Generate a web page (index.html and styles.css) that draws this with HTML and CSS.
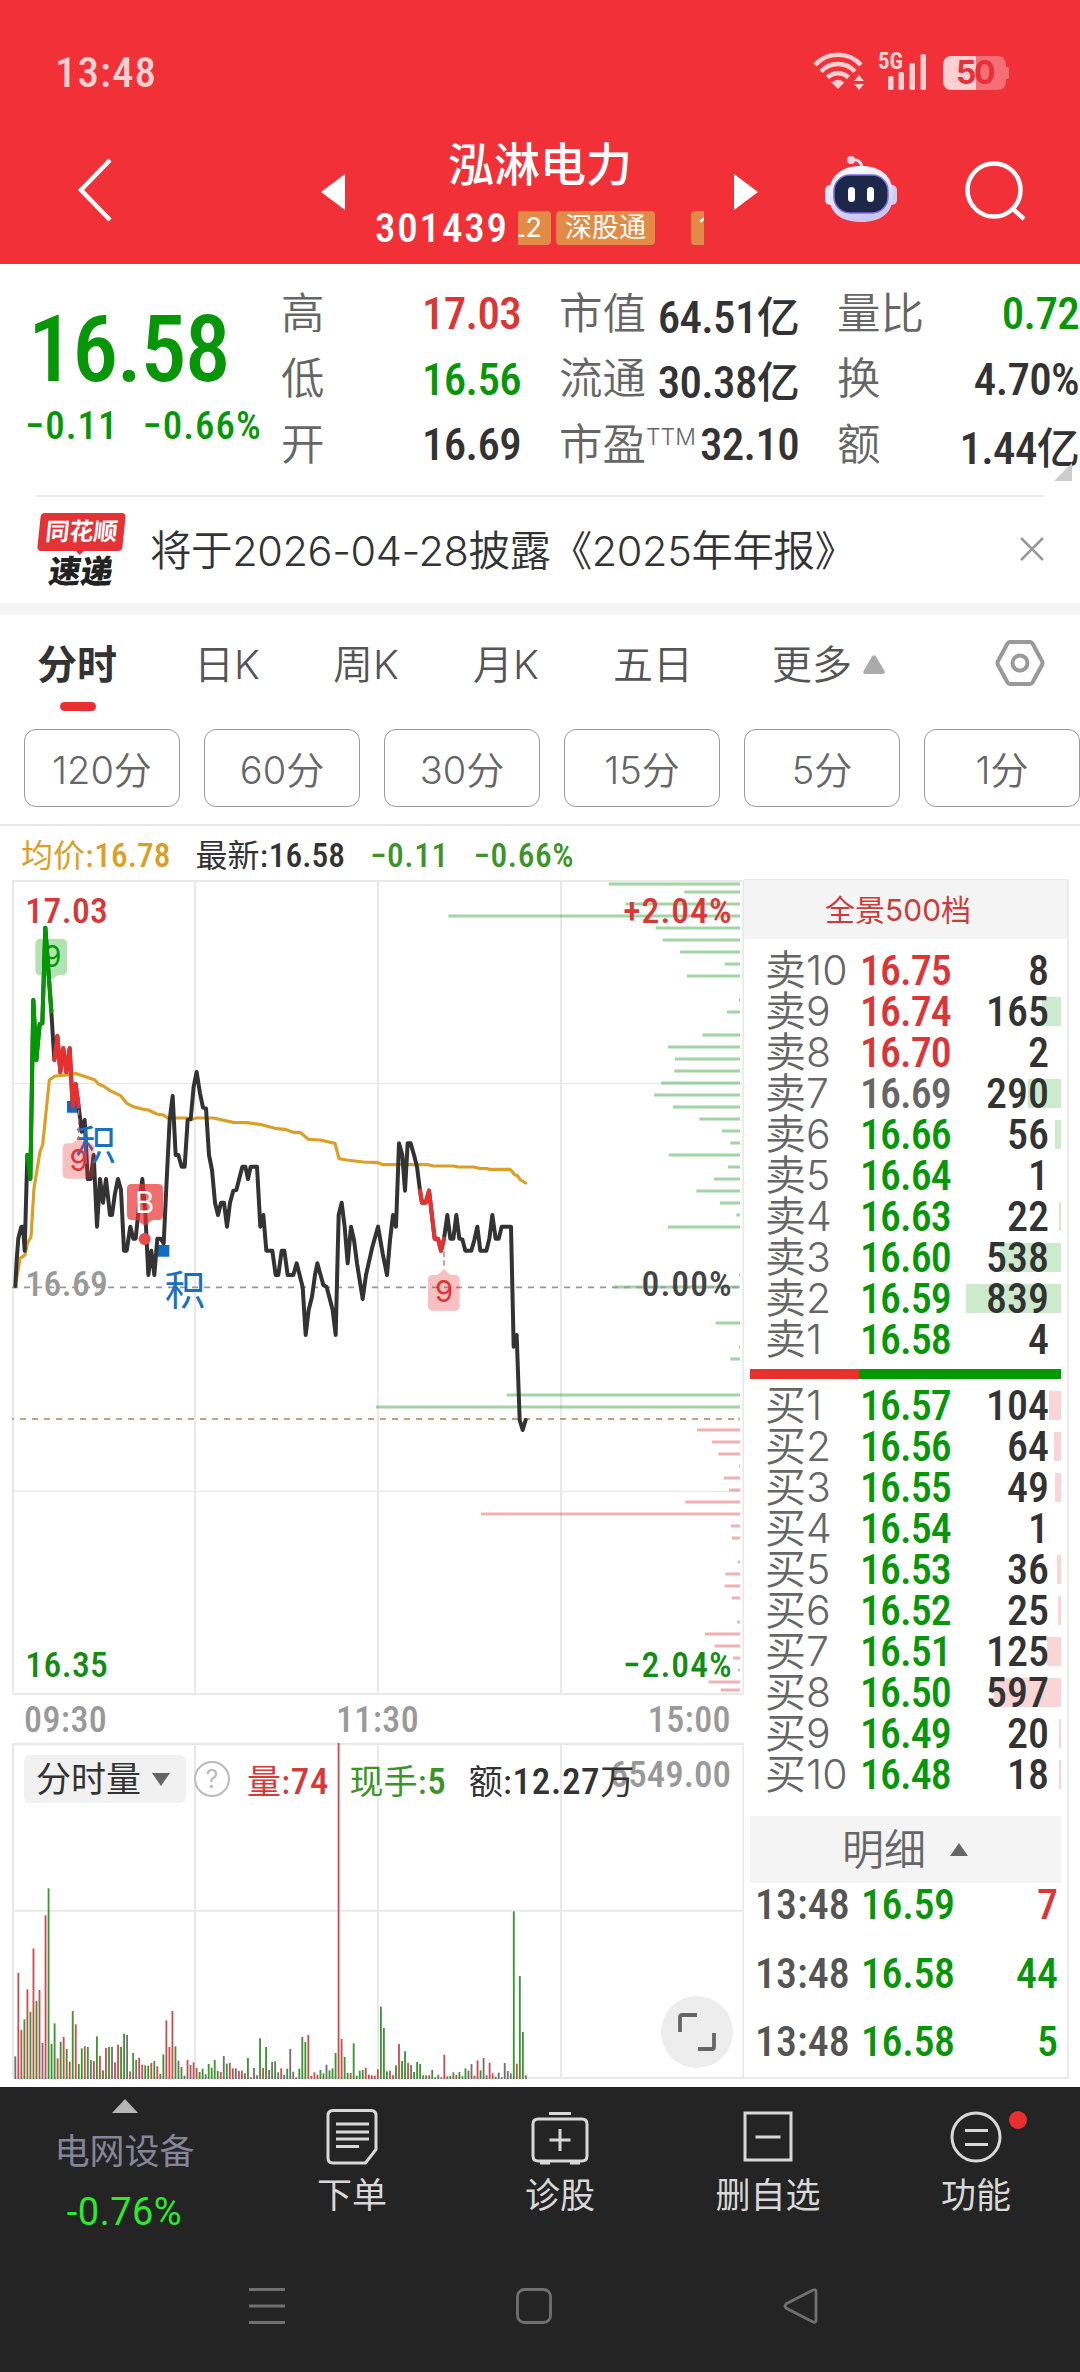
FILE: index.html
```html
<!DOCTYPE html>
<html lang="zh-CN">
  <head>
    <meta charset="UTF-8" />
    <meta name="viewport" content="width=device-width, initial-scale=1.0" />
    <title>泓淋电力 301439</title>
    <link rel="stylesheet" href="styles.css">
  </head>
  <body>
    <header class="header">
      <div class="status-bar">
        <span class="clock">13:48</span>
        <svg class="status-icons" width="200" height="40" viewBox="0 0 200 40">
          <g fill="none" stroke="#ffcfd1" stroke-width="4.6">
            <path d="M4 15a31 31 0 0 1 46 0" />
            <path d="M10 21.500a23 23 0 0 1 34 0" />
            <path d="M16.500 27.500a15 15 0 0 1 21 0" />
          </g>
          <g fill="#ffcfd1">
            <path d="M27 39l-6.500-6.500q6.500-5.500 13 0z" />
            <path d="M48 25l5 6h-10zM48 40l5-6h-10z" />
            <rect x="77" y="26" width="5.500" height="14" rx="1.500" />
            <rect x="87.500" y="22" width="5.500" height="18" rx="1.500" />
            <rect x="98.500" y="13" width="5.500" height="27" rx="1.500" />
            <rect x="109.500" y="4" width="5.500" height="36" rx="1.500" />
            <text x="67" y="19" class="net">5G</text>
            <path d="M141 6h24v34h-24q-9 0-9-9v-16q0-9 9-9z" />
            <path d="M165 6h21q9 0 9 9v2h1.500q1.500 0 1.500 2v8q0 2-1.500 2h-1.500v2q0 9-9 9h-21z" opacity=".4" />
          </g>
          <text x="145" y="34" class="battery">50</text>
        </svg>
      </div>
      <div class="title-bar">
        <svg class="back" width="36" height="64" viewBox="0 0 36 64">
          <path d="M33 2L4 32l29 30" fill="none" stroke="#fff" stroke-width="4.500" />
        </svg>
        <svg class="prev" width="24" height="36" viewBox="0 0 24 36"><path d="M24 0v36L0 18z" fill="#fff" /></svg>
        <div class="stock">
          <h1>泓淋电力</h1>
          <div class="stock-code">
            <span class="code">301439</span>
            <div class="tags">
              <span class="tag tag-l2">L2</span>
              <span class="tag">深股通</span>
              <span class="tag tag-next">10</span>
            </div>
          </div>
        </div>
        <svg class="next" width="24" height="36" viewBox="0 0 24 36"><path d="M0 0v36l24-18z" fill="#fff" /></svg>
        <svg class="robot" width="74" height="68" viewBox="0 0 74 68">
          <defs>
            <linearGradient id="shell" x1="0" y1="0" x2="0.3" y2="1">
              <stop offset="0" stop-color="#fff" />
              <stop offset="0.6" stop-color="#e3e2f8" />
              <stop offset="1" stop-color="#c9c8f2" />
            </linearGradient>
          </defs>
          <path d="M27 5q10-2 11 8" fill="none" stroke="#f3dff0" stroke-width="3" />
          <circle cx="27" cy="5" r="4" fill="#f6d5e2" />
          <rect x="1" y="30" width="10" height="20" rx="5" fill="#e6e4fa" />
          <rect x="63" y="30" width="10" height="20" rx="5" fill="#cfcdf4" />
          <path d="M37 11c20 0 32 10 32 29 0 18-12 27-32 27S5 58 5 40c0-19 12-29 32-29z" fill="url(#shell)" />
          <rect x="10" y="20" width="54" height="38" rx="16" fill="#1d2749" stroke="#7b6be6" stroke-width="1.500" />
          <rect x="24" y="32" width="7" height="15" rx="3.500" fill="#fff" />
          <rect x="43" y="32" width="7" height="15" rx="3.500" fill="#fff" />
        </svg>
        <svg class="search" width="62" height="62" viewBox="0 0 62 62">
          <g fill="none" stroke="#fff" stroke-width="4.500">
            <circle cx="29" cy="30" r="26.500" />
            <path d="M48 49l11 10" />
          </g>
        </svg>
      </div>
    </header>

    <section class="quote">
      <div class="last green">
        <div class="last-price">16.58</div>
        <div class="last-change"><span>−0.11</span><span>−0.66%</span></div>
      </div>
      <div class="stats">
        <div class="stat"><span>高</span><b class="red">17.03</b></div>
        <div class="stat"><span>市值</span><b>64.51<i>亿</i></b></div>
        <div class="stat"><span>量比</span><b class="green">0.72</b></div>
        <div class="stat"><span>低</span><b class="green">16.56</b></div>
        <div class="stat"><span>流通</span><b>30.38<i>亿</i></b></div>
        <div class="stat"><span>换</span><b>4.70%</b></div>
        <div class="stat"><span>开</span><b>16.69</b></div>
        <div class="stat"><span>市盈<sup>TTM</sup></span><b>32.10</b></div>
        <div class="stat"><span>额</span><b>1.44<i>亿</i></b></div>
      </div>
      <i class="corner"></i>
    </section>

    <section class="notice">
      <div class="notice-logo">
        <span class="logo-top">同花顺</span>
        <span class="logo-bottom">速递</span>
      </div>
      <p>将于2026-04-28披露《2025年年报》</p>
      <svg class="close" width="24" height="24" viewBox="0 0 24 24">
        <path d="M1 1l22 22M23 1L1 23" stroke="#999" stroke-width="2.500" />
      </svg>
    </section>

    <nav class="tabs">
      <span class="tab active">分时</span>
      <span class="tab">日K</span>
      <span class="tab">周K</span>
      <span class="tab">月K</span>
      <span class="tab">五日</span>
      <span class="tab more">更多<svg width="22" height="19" viewBox="0 0 22 19"><path d="M9 1.500q2-2.500 4 0L21.500 16q1 3-2 3h-17q-3 0-2-3z" fill="#aaa" /></svg></span>
      <svg class="settings" width="50" height="48" viewBox="0 0 50 48">
        <g fill="none" stroke="#999" stroke-width="4">
          <path d="M15 3h20q1.500 0 2.500 1.500L47 22q1 2 0 4L37.500 43.500Q36.500 45 35 45H15q-1.500 0-2.500-1.500L3 26q-1-2 0-4l9.500-17.500Q13.500 3 15 3z" />
          <circle cx="25" cy="24" r="7.500" />
        </g>
      </svg>
    </nav>

    <div class="periods">
      <button>120分</button>
      <button>60分</button>
      <button>30分</button>
      <button>15分</button>
      <button>5分</button>
      <button>1分</button>
    </div>

    <div class="legend">
      <span class="avg">均价:<b>16.78</b></span>
      <span>最新:<b>16.58</b></span>
      <span class="green2"><b>−0.11</b></span>
      <span class="green2"><b>−0.66%</b></span>
    </div>

    <main class="board">
      <div class="charts">
        <svg class="price-chart" width="744" height="815" viewBox="0 60 2232 2445">
          <!-- grid -->
          <path d="M39 63H2232M39 2502H2232M39 60V2502M585 60V2502M1134 60V2502M1683 60V2502M2230 60V2502" class="grid" />
          <path d="M39 671H2232M39 1894H2232" class="grid thin" />
          <!-- order depth -->
          <g transform="translate(1110)">
            <path class="depth-sell" d="M717 72H1110M943 96H1110M766 132H1110M235 168H1110M857 204H1110M878 240H1110M930 276H1110M1064 312H1110M951 348H1110M1107 420H1110M1071 456H1110M997 525H1110M894 561H1110M915 597H1110M913 633H1110M873 669H1110M852 705H1110M909 741H1110M988 777H1110M1056 813H1110M1081 849H1110M897 885H1110M1074 921H1110M1032 957H1110M979 993H1110M1050 1029H1110M1099 1065H1110M894 1101H1110M1107 1245H1110M731 1281H1110M1037 1389H1110M1107 1461H1110M1081 1497H1110M410 1605H1110M18 1641H1110M1104 1677H1110" />
            <path class="depth-buy" d="M981 1710H1110M1026 1746H1110M1045 1782H1110M1107 1818H1110M1062 1854H1110M1077 1890H1110M946 1926H1110M333 1962H1110M1083 1998H1110M1086 2034H1110M1103 2106H1110M1066 2142H1110M1064 2178H1110M1085 2214H1110M1101 2286H1110M1005 2322H1110M1034 2358H1110M1089 2394H1110M1103 2430H1110M1016 2466H1110M1052 2490H1110" />
          </g>
          <path d="M36 1282H2220" stroke="#999" stroke-width="5" stroke-dasharray="18" />
          <path d="M36 1677H2214" stroke="#bfa37c" stroke-width="6" stroke-dasharray="18" stroke-dashoffset="12" />
          <text x="76" y="1307" class="axis" fill="#999">16.69</text>
          <!-- average line -->
          <polyline class="line avg-line" points="46,1281 60,1195 75,1185 82,1150 93,1130 102,985 120,875 128,855 148,660 165,648 200,645 225,640 270,655 285,660 295,672 310,678 330,692 362,707 380,730 400,740 430,748 445,750 470,762 490,765 503,774 560,774 575,778 590,774 640,774 700,787 740,788 785,794 830,806 855,808 880,817 900,817 925,838 960,840 1005,850 1017,896 1040,900 1090,906 1134,908 1150,914 1285,914 1300,918 1360,918 1375,921 1420,921 1440,925 1460,926 1470,928 1530,928 1545,945 1550,945 1562,960 1577,969" />
          <!-- price line -->
          <path d="M201 723h33v35h-33zM473 1155h35v35h-35z" fill="#0f6cc4" />
          <path d="M120 237h67q14 0 14 14v80q0 14-14 14h-12l-20 14-20-14h-15q-14 0-14-14v-80q0-14 14-14z" fill="#009a00" opacity=".3" />
          <text x="157" y="320" class="mark" fill="#009a00">9</text>
          <polyline class="line" points="46,1278 50,1200 55,1135 64,1100 69,1100 74,1172 82,885 91,957 100,420 109,600 119,492 127,490 136,203 145,330 154,455 163,600 172,528 181,636 190,565 199,636 209,565 218,740 227,672 236,740 245,815 254,780 263,957 272,957 281,885 291,1100 300,957 309,1028 318,957 330,1065 336,1065 345,1000 354,957 363,990 372,1172 380,1172 391,1100 400,1136 407,1136 418,1028 427,957 436,1060 445,1245 454,1172 463,1245 472,1136 482,1136 491,1150 500,960 509,780 518,708 527,885 535,885 545,920 554,920 563,780 572,778 581,680 590,636 600,700 609,743 618,745 627,885 636,930 645,1028 654,1065 663,1028 672,1028 681,1100 690,1028 700,992 709,990 727,920 736,920 744,957 752,920 771,920 781,1100 790,1065 799,1172 817,1172 827,1245 835,1245 845,1172 853,1172 863,1245 880,1245 890,1210 908,1281 917,1425 926,1350 936,1310 945,1245 952,1210 970,1275 980,1281 998,1350 1007,1425 1016,1065 1025,1028 1034,1100 1043,1210 1053,1100 1062,1140 1071,1210 1088,1317 1098,1245 1116,1165 1134,1100 1148,1180 1161,1245 1170,1140 1179,1065 1188,1100 1197,850 1207,885 1215,992 1223,850 1232,850 1242,885 1251,920 1260,992 1266,1028 1277,1028 1287,992 1304,1136 1314,1136 1323,1172 1332,1136 1342,1065 1351,1136 1360,1136 1369,1065 1378,1136 1387,1138 1396,1172 1414,1172 1423,1140 1432,1100 1441,1172 1459,1172 1468,1136 1477,1065 1487,1136 1496,1136 1505,1100 1533,1100 1541,1460 1550,1425 1559,1680 1568,1710 1577,1680" />
          <polyline class="line down-run" points="82,885 91,957 100,420 109,600 119,492 127,490 136,203 145,330 154,455" />
          <polyline class="line up-run" points="163,600 172,528 181,636 190,565 199,636 209,565 218,740 227,672 236,740" />
          <polyline class="line up-run" points="1260,992 1266,1028 1277,1028 1287,992 1304,1136 1314,1136 1323,1172 1332,1136" />
          <!-- signals -->
          <text x="226" y="900" class="signal">积</text>
          <text x="494" y="1334" class="signal">积</text>
          <path d="M236 750V840M1332 1175V1228" stroke="#c66" stroke-width="4" stroke-dasharray="16 10" />
          <g fill="#e93030" fill-opacity=".3">
            <path d="M202 850h14l20-14 20 14h13q14 0 14 14v78q0 14-14 14h-67q-14 0-14-14v-78q0-14 14-14z" />
            <path d="M1298 1245h14l20-17 20 17h13q14 0 14 14v79q0 14-14 14h-67q-14 0-14-14v-79q0-14 14-14z" />
          </g>
          <text x="236" y="932" class="mark" fill="#e03333">9</text>
          <text x="1332" y="1327" class="mark" fill="#e03333">9</text>
          <path d="M395 972h80q14 0 14 14v80q0 14-14 14h-18l-23 18-23-18h-16q-14 0-14-14v-80q0-14 14-14z" fill="#e93030" opacity=".7" />
          <text x="434" y="1059" class="mark" fill="#fff">B</text>
          <circle cx="434" cy="1137" r="18" fill="#e84a4a" />
          <!-- axis labels -->
          <text x="76" y="188" class="axis" fill="#d93636">17.03</text>
          <text x="76" y="2450" class="axis" fill="#138c13">16.35</text>
          <text x="2198" y="188" class="axis end" fill="#d93636">+2.04%</text>
          <text x="2198" y="1307" class="axis end" fill="#444">0.00%</text>
          <text x="2198" y="2450" class="axis end" fill="#138c13">−2.04%</text>
        </svg>
        <div class="times"><span>09:30</span><span>11:30</span><span>15:00</span></div>
        <div class="volume">
          <svg class="volume-chart" width="744" height="336" viewBox="0 249 2232 1008">
            <path d="M39 252H2232M39 752H2232M39 1254H2232M39 249V1254M585 249V1254M1134 249V1254M1683 249V1254M2230 249V1254" class="grid" />
            <g id="bars"></g>
          </svg>
          <div class="volume-head">
            <span class="chip">分时量<i class="down"></i></span>
            <span class="help">?</span>
            <span class="red2">量:<b>74</b></span>
            <span class="green2">现手:<b>5</b></span>
            <span class="amount">额:<b>12.27</b>万</span>
            <span class="max">6549.00</span>
          </div>
          <div class="expand">
            <svg width="38" height="38" viewBox="0 0 38 38">
              <path d="M2 19V4q0-2 2-2h15M36 20v14q0 2-2 2H20" fill="none" stroke="#666" stroke-width="3.800" />
            </svg>
          </div>
        </div>
      </div>

      <aside class="book">
        <div class="book-title">全景500档</div>
        <div class="levels sell" id="sell"></div>
        <div class="ratio"><i></i></div>
        <div class="levels buy" id="buy"></div>
        <div class="detail-title">明细<i></i></div>
        <div class="deals">
          <div class="deal"><span>13:48</span><b>16.59</b><em class="red">7</em></div>
          <div class="deal"><span>13:48</span><b>16.58</b><em>44</em></div>
          <div class="deal"><span>13:48</span><b>16.58</b><em>5</em></div>
        </div>
      </aside>
    </main>

    <footer class="bottom">
      <div class="actions">
        <div class="sector">
          <i></i>
          <span>电网设备</span>
          <b>-0.76%</b>
        </div>
        <div class="action">
          <svg width="60" height="60" viewBox="0 0 60 60">
            <path d="M11 3.500h38q5 0 5 5v34L43.500 56H11q-5 0-5-5V8.500q0-5 5-5zM14 17h33M14 25h33M14 32h33M14 39.500h23" />
          </svg>
          <span>下单</span>
        </div>
        <div class="action">
          <svg width="60" height="60" viewBox="0 0 60 60">
            <path d="M19 6.500h22M8 12h44q5 0 5 5v32q0 5-5 5H8q-5 0-5-5V17q0-5 5-5zM30 22v22M19.500 33h21M10 56h10M40 56h10" />
          </svg>
          <span>诊股</span>
        </div>
        <div class="action">
          <svg width="60" height="60" viewBox="0 0 60 60">
            <path d="M7 6h46v47H7zM17.500 30h25" />
          </svg>
          <span>删自选</span>
        </div>
        <div class="action">
          <svg width="60" height="60" viewBox="0 0 60 60">
            <circle cx="30" cy="30" r="24" />
            <path d="M19 23.500h23M19 37.500h23" />
          </svg>
          <i class="dot"></i>
          <span>功能</span>
        </div>
      </div>
      <div class="system-nav">
        <svg width="36" height="36" viewBox="0 0 36 36"><path d="M0 1.500h36M0 18h36M0 34.500h36" /></svg>
        <svg width="36" height="36" viewBox="0 0 36 36"><rect x="1.500" y="1.500" width="33" height="33" rx="7" /></svg>
        <svg width="36" height="36" viewBox="0 0 36 36"><path d="M30 2L3 16q-2 2 0 4l27 14q3 1 3-2V4q0-3-3-2z" /></svg>
      </div>
    </footer>

    <script>
      // order book levels: label, price, quantity
      const sell = [
        ["卖10", "16.75", 8], ["卖9", "16.74", 165], ["卖8", "16.70", 2],
        ["卖7", "16.69", 290], ["卖6", "16.66", 56], ["卖5", "16.64", 1],
        ["卖4", "16.63", 22], ["卖3", "16.60", 538], ["卖2", "16.59", 839],
        ["卖1", "16.58", 4],
      ];
      const buy = [
        ["买1", "16.57", 104], ["买2", "16.56", 64], ["买3", "16.55", 49],
        ["买4", "16.54", 1], ["买5", "16.53", 36], ["买6", "16.52", 25],
        ["买7", "16.51", 125], ["买8", "16.50", 597], ["买9", "16.49", 20],
        ["买10", "16.48", 18],
      ];
      const open = 16.69;

      function drawLevels(id, rows) {
        document.getElementById(id).innerHTML = rows
          .map(([label, price, qty]) => {
            const color = price > open ? "red" : price < open ? "green" : "flat";
            const width = qty < 10 ? 0 : Math.max(2, Math.round(qty * 0.113));
            return `<div class="level"><i style="width:${width}px"></i><span>${label}</span><b class="${color}">${price}</b><em>${qty}</em></div>`;
          })
          .join("");
      }
      drawLevels("sell", sell);
      drawLevels("buy", buy);

      // one bar per minute: r = up, g = down, k = flat, then the y of its top
      const volume =
        "k1189 r939 r1110 g1078 r988 g1055 r865 g1023 r990 k1149 r766 g685 g1152 g1090 r1195 g1145 r1131 g1167 r1205 g1053 " +
        "r1093 g1212 g1165 r1159 g1161 k1200 r1203 g1129 r1187 g1231 r1164 g1161 k1161 r1207 r1154 g1161 g1121 k1125 r1234 g1179 " +
        "k1200 r1193 r1214 g1216 g1217 r1209 g1203 r1219 k1242 g1183 r1081 r1161 r1053 g1159 k1202 g1221 k1247 r1200 k1215 r1207 " +
        "r1224 g1236 g1226 k1243 g1212 g1223 g1200 g1233 r1236 k1188 g1211 r1209 r1225 k1225 r1233 r1232 k1240 g1194 r1252 k1224 " +
        "k1246 g1135 r1224 g1161 k1230 k1206 g1204 k1237 r1225 k1244 g1226 k1167 k1235 r1252 g1226 g1131 g1146 r1125 r1248 r1237 " +
        "r1244 g1230 g1240 k1214 g1231 g1225 g1179 r249 r1137 g1191 g1239 r1239 g1150 g1247 g1232 g1230 r1223 r1244 r1246 r1247 " +
        "r1228 g1040 g1104 g1234 r1232 r1246 g1216 r1152 g1203 g1174 r1209 k1215 g1236 g1206 g1212 g1246 k1246 r1246 g1230 g1252 " +
        "k1244 k1252 r1184 r1249 g1247 k1237 r1245 g1236 g1249 g1225 k1232 k1212 r1247 r1201 g1231 k1194 k1246 r1208 r1240 g1250 " +
        "k1238 r1252 k1209 k1233 k1240 g754 r1211 g948 g1116 r1246";
      const colors = { r: "#c94f4f", g: "#3c9432", k: "#717171" };
      document.getElementById("bars").innerHTML = volume
        .split(" ")
        .map((bar, i) => {
          const x = 46 + i * 9.063;
          return `<path d="M${x} 1257V${bar.slice(1)}" stroke="${colors[bar[0]]}" stroke-width="5.500" />`;
        })
        .join("");
    </script>
  </body>
</html>
```
FILE: styles.css
```css
* {
  box-sizing: border-box;
}

body {
  margin: 0;
  width: 1080px;
  height: 2372px;
  overflow: hidden;
  background: #fff;
  color: #333;
  font-family: Inter, "Noto Sans CJK SC", sans-serif;
}

b,
em,
i {
  font-style: normal;
}

b,
em,
.code,
.clock,
.times,
.max,
.deal span,
.last {
  font-family: "Roboto Condensed", "Noto Sans CJK SC", sans-serif;
  font-weight: 500;
}

.red {
  color: #dc3535;
}

.green {
  color: #079607;
}

.red2 {
  color: #d53a3a;
}

.green2 {
  color: #3c9428;
}

.flat {
  color: #666;
}

/* header */
.header {
  height: 264px;
  background: #f13037;
  color: #fff;
}

.status-bar {
  height: 124px;
  display: flex;
  justify-content: space-between;
  padding: 50px 69px 0 55px;
}

.clock {
  font-size: 43px;
  line-height: 44px;
  letter-spacing: 1px;
  color: #ffcfd1;
}

.net {
  font: 700 23px "Roboto Condensed", sans-serif;
}

.battery {
  font: 700 32px Inter, sans-serif;
  fill: #e93038;
  letter-spacing: -2.5px;
}

.title-bar {
  height: 140px;
  display: flex;
  align-items: flex-start;
}

.back {
  margin: 34px 0 0 77px;
}

.prev {
  margin: 50px 0 0 208px;
}

.stock {
  width: 330px;
  margin: 10px 29px 0 30px;
}

.stock h1 {
  margin: 0;
  text-align: center;
  font-size: 46px;
  line-height: 60px;
  font-weight: 500;
}

.stock-code {
  display: flex;
  align-items: center;
  height: 68px;
}

.code {
  width: 143px;
  font-size: 41px;
  letter-spacing: 1.8px;
}

.tags {
  display: flex;
  gap: 5px;
  width: 186px;
  overflow: hidden;
}

.tag {
  flex: none;
  width: 99px;
  height: 34px;
  line-height: 34px;
  border-radius: 4px;
  background: #e28b47;
  text-align: center;
  font-size: 27px;
}

.tag-l2 {
  width: 50px;
  margin-left: -17px;
}

.tag-next {
  margin-left: 31px;
  text-align: left;
  padding-left: 8px;
}

.next {
  margin-top: 50px;
}

.robot {
  margin: 31px 0 0 66px;
}

.search {
  margin: 36px 0 0 67px;
}

/* quote */
.quote {
  position: relative;
  height: 231px;
  display: flex;
}

.last {
  width: 281px;
  padding: 38px 0 0 25px;
}

.last-price {
  padding-left: 3px;
  font-size: 92px;
  line-height: 96px;
  letter-spacing: -1.7px;
}

.last-change {
  display: flex;
  gap: 24px;
  font-size: 39px;
  line-height: 56px;
  letter-spacing: 1px;
}

.stats {
  width: 799px;
  padding-top: 17px;
  display: grid;
  grid-template-columns: 240px 240px 242px;
  grid-auto-rows: 65.5px;
  column-gap: 38px;
}

.stat {
  display: flex;
  justify-content: space-between;
  align-items: center;
  white-space: nowrap;
}

.stat span {
  margin-top: -7px;
  font-size: 43.5px;
  font-weight: 350;
  color: #666;
}

.stat b {
  font-size: 45px;
  letter-spacing: -0.7px;
}

.stat b i {
  font-size: 43px;
}

.stat sup {
  font-size: 23px;
  line-height: 0;
  vertical-align: 15px;
}

.corner {
  position: absolute;
  right: 8px;
  bottom: 14px;
  border-left: 18px solid transparent;
  border-bottom: 18px solid #ccc;
}

/* notice */
.notice {
  height: 120px;
  display: flex;
  align-items: flex-start;
  border-bottom: 12px solid #f4f4f4;
  position: relative;
}

.notice::before {
  content: "";
  position: absolute;
  left: 36px;
  right: 36px;
  top: 0;
  height: 2px;
  background: #ececec;
}

.notice-logo {
  width: 90px;
  margin: 18px 0 0 36px;
  display: flex;
  flex-direction: column;
  align-items: center;
}

.logo-top {
  width: 85px;
  height: 38px;
  line-height: 37px;
  border-radius: 4px;
  background: #e33336;
  color: #fff;
  text-align: center;
  font-size: 24px;
  font-weight: 700;
  transform: skewX(-6deg);
}

.logo-top::after {
  content: "";
  display: block;
  width: 0;
  margin: -1px auto 0;
  border: 6px solid transparent;
  border-top-color: #e33336;
}

.logo-bottom {
  margin-top: 5px;
  height: 32px;
  line-height: 32px;
  font-size: 32px;
  font-weight: 900;
  color: #222;
  transform: skewX(-8deg);
}

.notice p {
  width: 870px;
  margin: 24px 0 0 24px;
  font-size: 41.5px;
  line-height: 64px;
  font-weight: 350;
  letter-spacing: -0.4px;
  white-space: nowrap;
}

.close {
  margin-top: 42px;
}

/* tabs */
.tabs {
  height: 114px;
  display: flex;
  font-size: 40px;
  line-height: 99px;
  font-weight: 350;
  color: #555;
  padding-left: 37px;
}

.tab {
  width: 140px;
  white-space: nowrap;
}

.tab:nth-child(1) {
  width: 157px;
}

.tab:nth-child(2) {
  width: 139px;
}

.tab.more {
  width: 223px;
  margin-left: 19px;
}

.tab.more svg {
  margin-left: 11px;
  vertical-align: 5px;
}

.active {
  position: relative;
  font-weight: 700;
  color: #333;
}

.active::after {
  content: "";
  position: absolute;
  left: 23px;
  top: 87px;
  width: 36px;
  height: 9px;
  border-radius: 5px;
  background: #e93030;
}

.settings {
  margin-top: 24px;
}

/* periods */
.periods {
  height: 97px;
  display: flex;
  gap: 24px;
  padding-left: 24px;
  border-bottom: 2px solid #e8e8e8;
}

.periods button {
  flex: none;
  width: 156px;
  height: 78px;
  padding: 0 0 2px;
  border: 1.5px solid #999;
  border-radius: 12px;
  background: #fff;
  color: #666;
  font-family: inherit;
  font-size: 38px;
  font-weight: 350;
}

.legend {
  height: 54px;
  display: flex;
  gap: 25px;
  padding-left: 21px;
  font-size: 32px;
  line-height: 60px;
}

.legend b {
  font-size: 33.5px;
}

.legend .green2 b {
  letter-spacing: 0.5px;
}

.legend .avg {
  color: #dc9f26;
}

/* board */
.board {
  display: flex;
  height: 1207px;
}

.charts {
  width: 744px;
}

.price-chart {
  display: block;
}

.grid {
  fill: none;
  stroke: #e9e9e9;
  stroke-width: 6;
}

.thin {
  stroke-width: 4;
}

.depth-sell {
  stroke: rgba(20, 150, 30, 0.4);
  stroke-width: 9;
}

.depth-buy {
  stroke: rgba(220, 70, 70, 0.42);
  stroke-width: 9;
}

.line {
  fill: none;
  stroke: #333;
  stroke-width: 12;
  stroke-linejoin: round;
  stroke-linecap: round;
}

.avg-line {
  stroke: #dc9f26;
  stroke-width: 9.5;
}

.down-run {
  stroke: #009a00;
}

.up-run {
  stroke: #e93030;
}

.axis {
  font: 500 107px "Roboto Condensed", sans-serif;
  letter-spacing: 1px;
}

.end {
  text-anchor: end;
  letter-spacing: 3px;
}

.mark {
  font: 400 88px Inter, sans-serif;
  text-anchor: middle;
}

.signal {
  font: 400 122px "Noto Sans CJK SC", sans-serif;
  fill: #1a6fbf;
}

.times {
  height: 48px;
  display: flex;
  justify-content: space-between;
  padding: 0 13px 0 24px;
  font-size: 36px;
  line-height: 50px;
  letter-spacing: 0.4px;
  color: #999;
}

.volume {
  position: relative;
  height: 336px;
}

.volume-chart {
  display: block;
}

.volume-head {
  position: absolute;
  left: 24px;
  top: 12px;
  right: 13px;
  height: 48px;
  display: flex;
  align-items: center;
  font-size: 34px;
  white-space: nowrap;
}

.volume-head b {
  font-size: 37px;
}

.chip {
  width: 162px;
  height: 48px;
  line-height: 47px;
  padding-left: 12px;
  border-radius: 6px;
  background: #f1f1f1;
  font-size: 35px;
  display: flex;
  align-items: center;
  gap: 11px;
}

.down {
  border: 9px solid transparent;
  border-top: 13px solid #666;
  border-bottom: 0;
}

.help {
  width: 36px;
  height: 36px;
  margin: 0 17px 0 8px;
  border: 2.5px solid #bbb;
  border-radius: 50%;
  line-height: 32px;
  text-align: center;
  font-size: 25px;
  color: #bbb;
}

.red2 b {
  letter-spacing: 0.8px;
}

.volume-head .green2 {
  margin-left: 20px;
}

.amount {
  margin-left: 23px;
}

.amount b {
  letter-spacing: 0.7px;
}

.max {
  position: absolute;
  right: 0;
  top: -2px;
  font-size: 37px;
  color: #999;
  z-index: -1;
}

.expand {
  position: absolute;
  left: 661px;
  top: 253px;
  width: 72px;
  height: 72px;
  border-radius: 50%;
  background: #ededed;
  display: flex;
  align-items: center;
  justify-content: center;
}

/* order book */
.book {
  width: 325px;
  height: 1200px;
  margin-top: -1px;
  border-right: 2px solid #ebebeb;
  border-bottom: 2px solid #ebebeb;
}

.book-title {
  height: 60px;
  background: #f4f4f4;
  border-top: 1px solid #e8e8e8;
  line-height: 60px;
  padding-left: 81px;
  font-size: 30px;
  color: #cc3b3b;
}

.levels {
  padding: 11px 6px 0 21px;
}

.level {
  position: relative;
  height: 41px;
  line-height: 41px;
  display: flex;
  align-items: center;
}

.level i {
  position: absolute;
  right: 0;
  top: 6px;
  height: 29px;
  background: #cdeacd;
}

.buy .level i {
  background: #fad5d5;
}

.level span {
  position: relative;
  width: 95px;
  font-size: 41px;
  font-weight: 350;
  color: #666;
}

.level b {
  font-size: 42px;
  letter-spacing: -1px;
}

.level em {
  position: relative;
  margin-left: auto;
  padding-right: 12px;
  font-size: 42px;
}

.ratio {
  height: 10px;
  margin: 9px 6px 0;
  background: #009a00;
}

.ratio i {
  display: block;
  width: 109px;
  height: 10px;
  background: #e93030;
}

.buy {
  padding-top: 6px;
}

.detail-title {
  margin: 21px 6px 0;
  height: 67px;
  line-height: 68px;
  padding-left: 92px;
  background: #f4f4f4;
  font-size: 42px;
  font-weight: 350;
  color: #666;
  display: flex;
  align-items: center;
  gap: 24px;
}

.detail-title i {
  border: 9px solid transparent;
  border-bottom: 13px solid #666;
  border-top: 0;
}

.deals {
  height: 188px;
  display: flex;
  flex-direction: column;
  justify-content: space-between;
  padding: 0 9px 8px 11px;
}

.deal {
  display: flex;
  font-size: 42px;
  line-height: 43px;
  color: #079607;
}

.deal span {
  width: 106px;
  color: #555;
}

.deal b {
  letter-spacing: -0.4px;
}

.deal em {
  margin-left: auto;
}

.deal .red {
  color: #dc3535;
}

/* bottom */
.bottom {
  height: 285px;
  background: #242424;
}

.actions {
  height: 180px;
  display: flex;
  padding-left: 21px;
}

.sector {
  width: 207px;
  margin-right: 20px;
  padding-top: 12px;
  display: flex;
  flex-direction: column;
  align-items: center;
  font-size: 35px;
  color: #85859a;
}

.sector i {
  border: 13px solid transparent;
  border-bottom: 14px solid #b5b5b5;
  border-top: 0;
}

.sector span {
  margin-top: 12px;
  line-height: 52px;
}

.sector b {
  margin-top: 8px;
  line-height: 54px;
  font-family: Roboto, sans-serif;
  font-weight: 400;
  font-size: 38px;
  letter-spacing: 0.5px;
  color: #2bea2b;
}

.action {
  position: relative;
  width: 208px;
  padding-top: 20px;
  display: flex;
  flex-direction: column;
  align-items: center;
  font-size: 35px;
  line-height: 52px;
  color: #d8d8d8;
}

.action svg {
  fill: none;
  stroke: #d8d8d8;
  stroke-width: 3;
}

.action span {
  margin-top: 2px;
}

.dot {
  position: absolute;
  left: 137px;
  top: 24px;
  width: 18px;
  height: 18px;
  border-radius: 50%;
  background: #e93030;
}

.system-nav {
  display: flex;
  justify-content: space-between;
  padding: 21px 261px 0 249px;
}

.system-nav svg {
  fill: none;
  stroke: #6f6f6f;
  stroke-width: 2.800;
}
```
